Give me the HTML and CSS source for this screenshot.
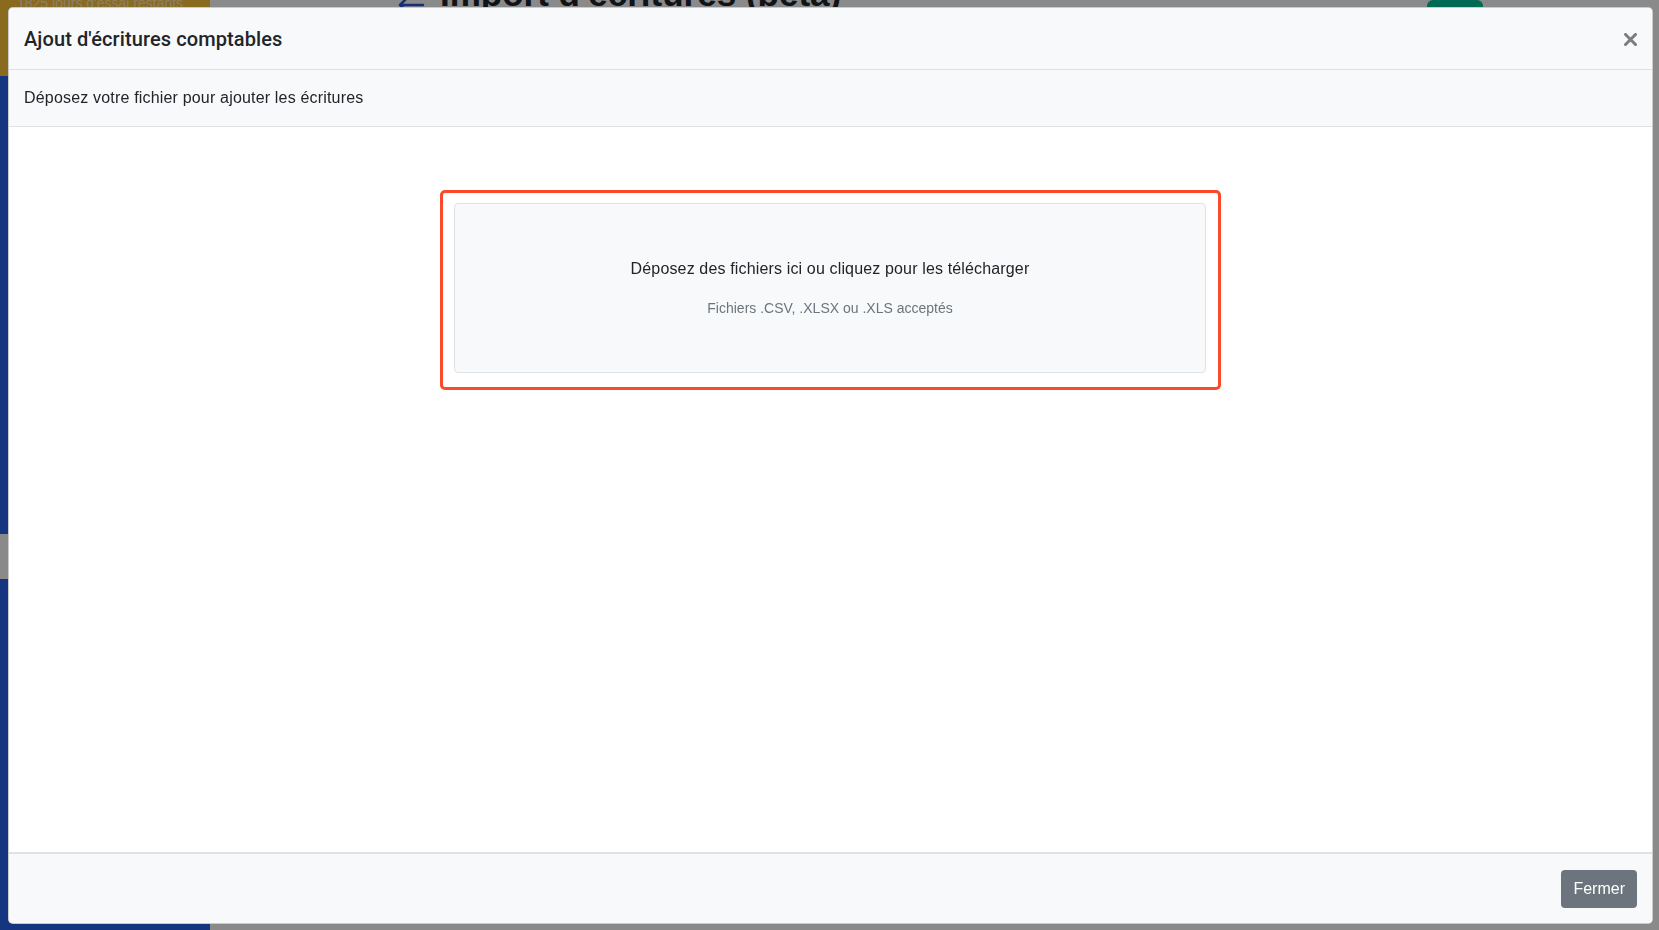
FILE: index.html
```html
<!DOCTYPE html>
<html lang="fr">
<head>
  <meta charset="UTF-8">
  <meta name="viewport" content="width=device-width, initial-scale=1">
  <title>Import d'écritures (beta)</title>
  <link rel="stylesheet" href="styles.css">
</head>
<body>

<div class="page">
  <aside class="sidebar">
    <div class="trial">1825 jours d'essai restants</div>
    <nav class="side-nav">
      <a href="#">Tableau de bord</a>
      <a href="#">Banque</a>
      <a href="#">Ventes</a>
      <a href="#">Achats</a>
      <a href="#">Notes de frais</a>
      <a href="#">Immobilisations</a>
      <a href="#">Salaires</a>
      <a href="#">Déclarations</a>
      <a href="#" class="active">Comptabilité</a>
      <a href="#">Paramètres</a>
    </nav>
  </aside>

  <main class="content">
    <div class="page-head">
      <svg class="back" width="28" height="22" viewBox="0 0 28 22">
        <path d="M12 2 L3 11 L12 20 M3 11 H26" fill="none" stroke="#2a5ad8" stroke-width="2.5" stroke-linecap="round" stroke-linejoin="round"/>
      </svg>
      <h1>Import d'écritures (beta)</h1>
      <button class="btn-valid">Valider</button>
    </div>
  </main>
</div>

<div class="backdrop"></div>

<div class="modal">
  <div class="modal-header">
    <h5>Ajout d'écritures comptables</h5>
    <button class="close" aria-label="Fermer">
      <svg width="13" height="13" viewBox="0 0 13 13">
        <path d="M1.5 1.5 L11.5 11.5 M11.5 1.5 L1.5 11.5" stroke="#7d7d7d" stroke-width="3" stroke-linecap="square"/>
      </svg>
    </button>
  </div>

  <div class="modal-sub">Déposez votre fichier pour ajouter les écritures</div>

  <div class="modal-body">
    <div class="zone-outline">
      <div class="dropzone">
        <p class="drop-title">Déposez des fichiers ici ou cliquez pour les télécharger</p>
        <p class="drop-hint">Fichiers .CSV, .XLSX ou .XLS acceptés</p>
      </div>
    </div>
  </div>

  <div class="modal-footer">
    <button class="btn-close">Fermer</button>
  </div>
</div>

</body>
</html>
```

FILE: styles.css
```css
/* Reset */
* {
  margin: 0;
  padding: 0;
  box-sizing: border-box;
}

html, body {
  height: 100%;
  overflow: hidden;
}

body {
  font-family: 'Liberation Sans', Arial, sans-serif;
  color: #212529;
  background-color: #fff;
}

/* Page behind the modal */
.page {
  display: flex;
  height: 100%;
}

.sidebar {
  width: 210px;
  flex-shrink: 0;
  background-color: #2962ed;
}

.trial {
  height: 80px;
  background-color: #ffc438;
  color: rgba(255, 255, 255, 0.7);
  font-size: 14px;
  line-height: 14px;
  white-space: nowrap;
  padding: 0 17px;
  margin-top: -4px;
}

.side-nav {
  display: flex;
  flex-direction: column;
  padding-top: 98px;
}

.side-nav a {
  height: 45px;
  line-height: 45px;
  padding: 0 20px;
  color: #fff;
  text-decoration: none;
  font-size: 15px;
}

.side-nav a.active {
  background-color: #fff;
  color: #2962ed;
}

.content {
  flex: 1;
}

.page-head {
  display: flex;
  align-items: center;
  height: 36px;
  margin-top: -24px;
  padding: 0 176px 0 187px;
}

.page-head .back {
  align-self: flex-start;
  margin-top: 18px;
  margin-right: 15px;
}

.page-head h1 {
  font-size: 35px;
  font-weight: 700;
  color: #212529;
}

.btn-valid {
  margin-left: auto;
  align-self: flex-start;
  margin-top: 24px;
  width: 56px;
  height: 36px;
  border: none;
  border-radius: 6px;
  background-color: #00c69d;
  color: #fff;
  font-family: inherit;
  font-size: 15px;
}

.backdrop {
  position: fixed;
  inset: 0;
  background-color: rgba(0, 0, 0, 0.46);
}

/* Modal */
.modal {
  position: fixed;
  top: 7px;
  left: 8px;
  right: 6px;
  bottom: 6px;
  display: flex;
  flex-direction: column;
  background-color: #fff;
  border: 1px solid rgba(0, 0, 0, 0.2);
  border-radius: 5px;
  overflow: hidden;
}

.modal-header {
  display: flex;
  align-items: center;
  justify-content: space-between;
  height: 62px;
  padding: 0 15px;
  background-color: #f8f9fa;
  border-bottom: 1px solid #dee2e6;
}

.modal-header h5 {
  font-family: Roboto, 'Liberation Sans', sans-serif;
  font-size: 20px;
  font-weight: 500;
  line-height: 1.5;
  letter-spacing: 0.1px;
  color: #212529;
}

.close {
  display: flex;
  border: none;
  background: none;
  cursor: pointer;
  margin-top: 2px;
}

.modal-sub {
  height: 57px;
  padding: 0 15px;
  display: flex;
  align-items: center;
  font-size: 16px;
  letter-spacing: 0.18px;
  background-color: #f8f9fa;
  border-bottom: 1px solid #dee2e6;
}

.modal-body {
  flex: 1;
  display: flex;
  flex-direction: column;
  align-items: center;
  padding-top: 63px;
}

.zone-outline {
  width: 781px;
  height: 200px;
  padding: 10px 12px 14px 11px;
  border: 3px solid #fa4a2a;
  border-radius: 5px;
}

.dropzone {
  height: 170px;
  display: flex;
  flex-direction: column;
  align-items: center;
  justify-content: center;
  gap: 17px;
  background-color: #f8f9fa;
  border: 1px solid #dfe2e6;
  border-radius: 4px;
  cursor: pointer;
}

.drop-title {
  font-size: 16px;
  line-height: 24px;
  letter-spacing: 0.15px;
  color: #212529;
}

.drop-hint {
  font-size: 14px;
  line-height: 21px;
  color: #6c757d;
}

.modal-footer {
  display: flex;
  justify-content: flex-end;
  align-items: center;
  height: 71px;
  padding: 0 15px;
  background-color: #f8f9fa;
  border-top: 2px solid #dfe1e8;
}

.btn-close {
  height: 38px;
  padding: 0 12px;
  border: none;
  border-radius: 4px;
  background-color: #6c757d;
  color: #fff;
  font-family: inherit;
  font-size: 16px;
  cursor: pointer;
}
```
